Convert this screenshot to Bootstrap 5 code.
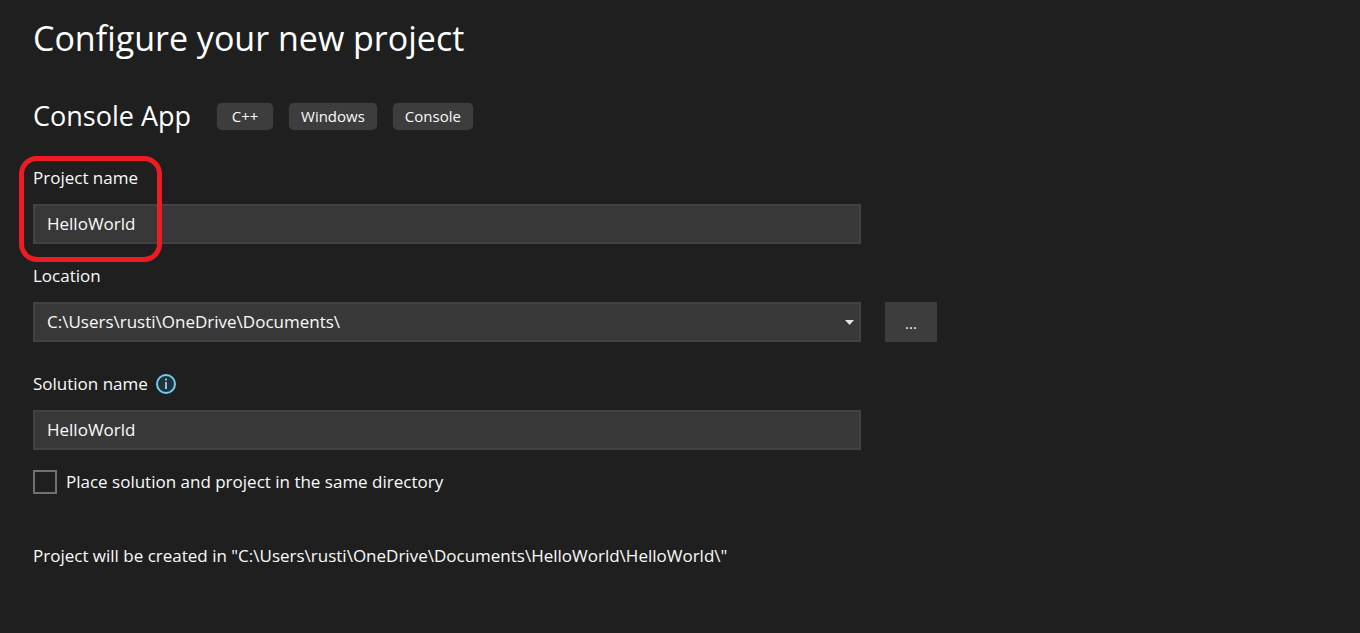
<!DOCTYPE html>
<html lang="en">
<head>
<meta charset="utf-8">
<meta name="viewport" content="width=device-width, initial-scale=1">
<title>Configure your new project</title>
<link href="https://cdn.jsdelivr.net/npm/bootstrap@5.3.0/dist/css/bootstrap.min.css" rel="stylesheet">
<style>
  body {
    background: #1f1f1f;
    color: #fafafa;
    font-family: "Segoe UI", "Open Sans", "Noto Sans", sans-serif;
    font-size: 17px;
    line-height: 24px;
  }
  .wizard { padding: 14px 33px 40px; }
  .wizard-title { font-size: 34px; line-height: 48px; color: #fff; }
  .template-row { gap: 26px; margin: 36px 0 32px; }
  .template-name { font-size: 27px; line-height: 36px; color: #fff; }
  .tag {
    min-width: 56px;
    background: #3d3d3d;
    border-radius: 5px;
    font-size: 15px;
    line-height: 27px;
    padding: 0 12px;
    box-shadow: 0 0 2px #333;
  }
  .field { width: 100%; max-width: 828px; }
  .field .form-control, .field .form-select {
    height: 40px;
    padding: 0 12px 2px;
    border: 2px solid #424242;
    border-radius: 0;
    background-color: #383838;
    color: #fafafa;
    font-size: 17px;
    line-height: 24px;
  }
  .field .form-select { background-image: none; padding: 0 32px 0 12px; }
  .select-arrow { right: 7px; top: 18px; pointer-events: none; }
  .btn-browse {
    width: 52px;
    height: 40px;
    padding: 2px 0 0;
    border: 0;
    border-radius: 0;
    background: #3d3d3d;
    color: #fafafa;
    font-size: 15px;
  }
  .btn-browse:hover { background: #4a4a4a; color: #fff; }
  .same-dir { gap: 9px; }
  .same-dir .form-check-input {
    width: 24px;
    height: 24px;
    border: 2px solid #717171;
    border-radius: 0;
    background-color: transparent;
  }
  /* Callout drawn round the project name */
  .callout-ring {
    left: -14px;
    top: -10px;
    width: 143px;
    height: 106px;
    border: 5px solid #ed1c24;
    border-radius: 18px;
    pointer-events: none;
  }
  .gap-label { margin-bottom: 14px; }
  .gap-field { margin-bottom: 20px; }
  .gap-section { margin-bottom: 30px; }
  .status-line { margin: 50px 0 0; }
</style>
</head>
<body>
<main class="wizard">
  <h1 class="wizard-title fw-normal mb-0">Configure your new project</h1>

  <div class="template-row d-flex flex-wrap align-items-center">
    <h2 class="template-name fw-normal mb-0">Console App</h2>
    <div class="d-flex gap-3">
      <span class="tag text-center">C++</span>
      <span class="tag text-center">Windows</span>
      <span class="tag text-center">Console</span>
    </div>
  </div>

  <form>
    <div class="field position-relative gap-field">
      <label class="d-block gap-label" for="project">Project name</label>
      <input class="form-control" id="project" type="text" value="HelloWorld">
      <div class="callout-ring position-absolute"></div>
    </div>

    <label class="d-block gap-label" for="location">Location</label>
    <div class="d-flex gap-4 gap-section">
      <div class="field position-relative">
        <select class="form-select" id="location">
          <option>C:\Users\rusti\OneDrive\Documents\</option>
        </select>
        <svg class="select-arrow position-absolute" width="9" height="5" viewBox="0 0 9 5" aria-hidden="true"><path d="M0 0h9L4.500 5z" fill="#e4e4e4"/></svg>
      </div>
      <button class="btn btn-browse flex-shrink-0" type="button" aria-label="Browse">...</button>
    </div>

    <div class="field gap-field">
      <div class="d-flex align-items-center gap-2 gap-label">
        <label for="solution">Solution name</label>
        <svg width="20" height="20" viewBox="0 0 20 20" role="img" aria-label="Information">
          <circle cx="10" cy="10" r="9" fill="#263238" stroke="#6ccdf5" stroke-width="2"/>
          <path d="M9 4.500h2v2H9zM9 8h2v7H9z" fill="#6ccdf5"/>
        </svg>
      </div>
      <input class="form-control" id="solution" type="text" value="HelloWorld">
    </div>

    <div class="same-dir d-flex align-items-center">
      <input class="form-check-input flex-shrink-0 m-0" id="samedir" type="checkbox">
      <label for="samedir">Place solution and project in the same directory</label>
    </div>

    <p class="status-line">Project will be created in "C:\Users\rusti\OneDrive\Documents\HelloWorld\HelloWorld\"</p>
  </form>
</main>
<script src="https://cdn.jsdelivr.net/npm/bootstrap@5.3.0/dist/js/bootstrap.bundle.min.js"></script>
</body>
</html>
